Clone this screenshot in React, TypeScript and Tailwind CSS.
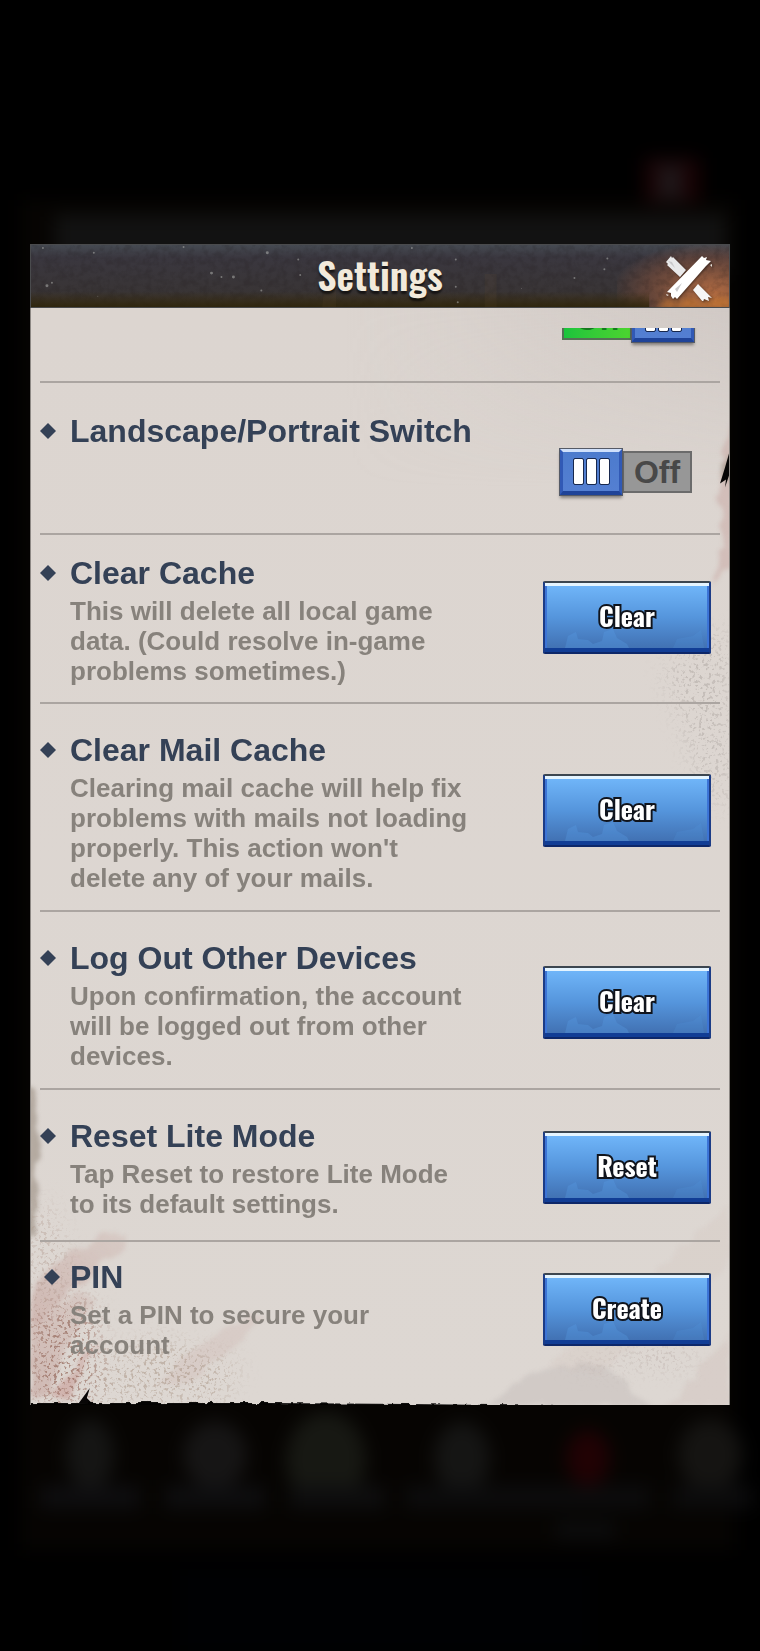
import { useState } from 'react';
import clsx from 'clsx';

interface ToggleProps {
  id: string;
  label: string;
  defaultOn: boolean;
}

interface Setting {
  id: string;
  title: string;
  description?: string;
  action?: string;
  rowClass: string;
  titleClass?: string;
  controlClass?: string;
}

const settings: Setting[] = [
  {
    id: 'orientation',
    title: 'Landscape/Portrait Switch',
    rowClass: 'min-h-[152px] border-b-2 pt-[30px]',
    controlClass: 'pt-9 pr-7',
  },
  {
    id: 'cache',
    title: 'Clear Cache',
    description: 'This will delete all local game data. (Could resolve in-game problems sometimes.)',
    action: 'Clear',
    rowClass: 'border-b-2 pt-5 pb-4',
    controlClass: 'pt-[26px] pr-[9px]',
  },
  {
    id: 'mail',
    title: 'Clear Mail Cache',
    description:
      "Clearing mail cache will help fix problems with mails not loading properly. This action won't delete any of your mails.",
    action: 'Clear',
    rowClass: 'border-b-2 pt-7 pb-[17px]',
    controlClass: 'pt-[42px] pr-[9px]',
  },
  {
    id: 'devices',
    title: 'Log Out Other Devices',
    description: 'Upon confirmation, the account will be logged out from other devices.',
    action: 'Clear',
    rowClass: 'border-b-2 pt-7 pb-[17px]',
    controlClass: 'pt-[26px] pr-[9px]',
  },
  {
    id: 'lite',
    title: 'Reset Lite Mode',
    description: 'Tap Reset to restore Lite Mode to its default settings.',
    action: 'Reset',
    rowClass: 'border-b-2 pt-7 pb-[21px]',
    controlClass: 'pt-[13px] pr-[9px]',
  },
  {
    id: 'pin',
    title: 'PIN',
    description: 'Set a PIN to secure your account',
    action: 'Create',
    rowClass: 'pt-[17px] pb-[21px]',
    titleClass: 'pl-1 gap-[10px]',
    controlClass: 'pt-[14px] pr-[9px]',
  },
];

const headerSpecks = [
  [12, 3, 2], [237, 8, 3], [181, 29, 3], [203, 33, 3], [191, 33, 2], [268, 15, 2], [270, 31, 2],
  [16, 42, 3], [21, 39, 2], [231, 47, 2], [153, 2, 2], [63, 8, 2], [382, 3, 2], [426, 15, 2],
  [426, 43, 2], [428, 59, 2], [578, 14, 2], [575, 25, 2], [545, 34, 2], [492, 45, 1], [67, 53, 1],
];

// Dimmed and blurred game screen behind the dialog
function Backdrop() {
  return (
    <svg
      className="absolute inset-0 h-full w-full"
      viewBox="0 0 760 1651"
      preserveAspectRatio="none"
      aria-hidden
    >
      <defs>
        <filter
          id="soft"
          filterUnits="userSpaceOnUse"
          x="0"
          y="0"
          width="760"
          height="1651"
          colorInterpolationFilters="sRGB"
        >
          <feGaussianBlur stdDeviation="9" />
        </filter>
      </defs>
      <g filter="url(#soft)">
        <rect x="20" y="200" width="715" height="1350" fill="#060402" />
        <rect x="55" y="215" width="670" height="60" fill="#121212" />
        <rect x="644" y="158" width="56" height="44" fill="#190204" />
        <path d="M658 165l24 34m0-34l-24 34" stroke="#1f1c1e" strokeWidth="10" />
        <ellipse cx="90" cy="1455" rx="24" ry="36" fill="#151514" />
        <ellipse cx="215" cy="1455" rx="32" ry="34" fill="#161515" />
        <ellipse cx="326" cy="1460" rx="40" ry="48" fill="#171813" />
        <ellipse cx="462" cy="1458" rx="28" ry="36" fill="#151514" />
        <ellipse cx="588" cy="1458" rx="22" ry="28" fill="#210204" />
        <ellipse cx="710" cy="1455" rx="32" ry="36" fill="#151412" />
        <rect x="40" y="1486" width="100" height="22" fill="#0e0e10" />
        <rect x="165" y="1486" width="100" height="22" fill="#0e0e10" />
        <rect x="290" y="1486" width="95" height="22" fill="#0e0e0f" />
        <rect x="405" y="1486" width="245" height="22" fill="#0c0c0d" />
        <rect x="672" y="1486" width="80" height="22" fill="#0c0c0d" />
        <rect x="555" y="1522" width="60" height="16" fill="#0c0d0e" />
        <rect x="180" y="1570" width="410" height="81" fill="#000103" />
      </g>
    </svg>
  );
}

// Stains, speckles and worn edges of the paper
function PaperTexture() {
  return (
    <svg
      className="absolute inset-0 h-full w-full"
      viewBox="0 0 700 1100"
      preserveAspectRatio="none"
      aria-hidden
    >
      <defs>
        <filter id="speckle" x="-5%" y="-5%" width="110%" height="110%" colorInterpolationFilters="sRGB">
          <feTurbulence type="fractalNoise" baseFrequency="0.3" numOctaves="3" seed="4" />
          <feColorMatrix values="0 0 0 0 0  0 0 0 0 0  0 0 0 0 0  0 0 0 7 -3.8" result="dots" />
          <feGaussianBlur in="SourceGraphic" stdDeviation="12" />
          <feComposite in2="dots" operator="in" />
          <feGaussianBlur stdDeviation="0.5" />
        </filter>
        <filter id="rough" x="-10%" y="-10%" width="120%" height="120%" colorInterpolationFilters="sRGB">
          <feTurbulence type="fractalNoise" baseFrequency="0.06" numOctaves="3" seed="9" />
          <feDisplacementMap in="SourceGraphic" scale="14" xChannelSelector="R" yChannelSelector="G" />
          <feGaussianBlur stdDeviation="2" />
        </filter>
        <filter id="torn" x="-5%" y="-300%" width="110%" height="700%" colorInterpolationFilters="sRGB">
          <feTurbulence type="fractalNoise" baseFrequency="0.1" numOctaves="2" seed="2" />
          <feDisplacementMap in="SourceGraphic" scale="6" xChannelSelector="R" yChannelSelector="G" />
        </filter>
        <linearGradient id="wash" x1="0" y1="1" x2="1" y2="0">
          <stop offset="0" stopColor="#bd8f88" stopOpacity="0.42" />
          <stop offset="1" stopColor="#bd8f88" stopOpacity="0.16" />
        </linearGradient>
        <linearGradient id="shade" x1="0" y1="0" x2="1" y2="0">
          <stop offset="0.45" stopColor="#c4bcb9" stopOpacity="0" />
          <stop offset="1" stopColor="#c4bcb9" stopOpacity="0.45" />
        </linearGradient>
        <linearGradient id="fade" x1="0" y1="0" x2="0" y2="1">
          <stop offset="0" stopColor="#fff" />
          <stop offset="1" stopColor="#000" />
        </linearGradient>
        <mask id="top">
          <rect width="700" height="180" fill="url(#fade)" />
        </mask>
      </defs>
      <rect width="700" height="180" fill="url(#shade)" mask="url(#top)" />
      <g filter="url(#rough)">
        <path d="M0 990l20-30 50-30 26-2-6 18-30 24L0 1020z" fill="url(#wash)" />
        <path d="M0 1090V1015l56-30 10 10-30 44-16 50z" fill="url(#wash)" />
        <path d="M124 1080l40-36 56-36 16 4-34 32-50 36z" fill="#c39c97" opacity="0.18" />
        <path d="M18 1092l54-60-38 64z" fill="#b86a62" opacity="0.32" />
        <path d="M454 1100q40-34 80-40t60 16 30 26z" fill="#aaa4a3" opacity="0.24" />
        <path d="M640 1100l60-70v70z" fill="#c3a49e" opacity="0.18" />
        <path d="M520 1060L700 900v60L570 1070z" fill="#c3a49e" opacity="0.1" />
        <path d="M704 110q-10 30-8 50l-6 30 4 50-10 40q16-20 20-30z" fill="#c49c97" opacity="0.4" />
        <path d="M704 145q-14 10-10 22t10 6z" fill="#9a8c7e" opacity="0.5" />
        <path d="M-4 780h9l1 18-2 30 4 20-3 30 2 22-3 30h-8z" fill="#a2978b" opacity="0.7" />
      </g>
      <g filter="url(#speckle)">
        <path d="M0 1010l60-16 10 60-10 46H0z" fill="#96695c" opacity="0.7" />
        <path d="M0 900h20l20 70-40 50z" fill="#a88c80" opacity="0.4" />
        <path d="M60 1070l60-40 90 30-20 40H70z" fill="#a08a78" opacity="0.45" />
        <path d="M530 1060l130-20v20z" fill="#97807a" opacity="0.4" />
        <path d="M635 365l40-40h24l1 180-25-20-25-80z" fill="#6d6560" opacity="0.22" />
      </g>
      <path d="M700 146l-4 14-5 16 6-4-1 8 4-12z" fill="#060505" />
      <path d="M48 1098l11-15-3 10 6 6z" fill="#080606" />
      <path
        d="M-10 1098h250l140 1 160 2 170 1v20H-10z"
        fill="#030201"
        filter="url(#torn)"
      />
    </svg>
  );
}

function Grip() {
  return (
    <span className="z-10 flex h-[46px] w-[62px] items-center justify-center gap-1 border-3 border-t-[#cfe0fb] border-r-[#3159b5] border-b-4 border-b-[#1f4398] border-l-[#3159b5] bg-linear-to-b from-[#4c7bcd] to-[#547fd2] shadow-[0_0_0_1px_#555a66,0_3px_3px_#0006]">
      <i className="h-[25px] w-[9px] rounded-[1px] bg-white outline-1 outline-[#18284e]" />
      <i className="h-[25px] w-[9px] rounded-[1px] bg-white outline-1 outline-[#18284e]" />
      <i className="h-[25px] w-[9px] rounded-[1px] bg-white outline-1 outline-[#18284e]" />
    </span>
  );
}

function Toggle({ id, label, defaultOn }: ToggleProps) {
  const [on, setOn] = useState(defaultOn);

  return (
    <label htmlFor={id} className={clsx('relative flex cursor-pointer items-center', on && 'flex-row-reverse')}>
      <input
        id={id}
        type="checkbox"
        aria-label={label}
        checked={on}
        onChange={() => setOn(!on)}
        className="absolute inset-0 m-0 cursor-pointer opacity-0"
      />
      <Grip />
      <span
        className={clsx(
          'flex h-[42px] w-[70px] items-center justify-center border-2 text-[32px] font-bold',
          on
            ? 'border-[#557055] bg-linear-to-r from-[#19c43c] to-[#4bd42f] text-[#137a1d]'
            : 'border-[#6b6b6b] bg-[#979797] text-[#484848]',
        )}
      >
        {on ? 'On' : 'Off'}
      </span>
    </label>
  );
}

function ActionButton({ children, describedBy }: { children: string; describedBy: string }) {
  return (
    <button
      type="button"
      aria-describedby={describedBy}
      className="relative flex h-[73px] w-[168px] cursor-pointer items-center justify-center rounded-xs border-2 border-t-[#3c4650] border-r-[#1c3c86] border-b-[#0d2769] border-l-[#1c3c86] bg-linear-to-b from-[#72b8fb] via-[#5595dc] to-[#3f6dae] pb-1 font-[Oswald,sans-serif] text-[26px] font-bold text-white shadow-[inset_0_3px_0_#e4f4ff,inset_0_-4px_0_#113d95,inset_2px_0_0_#3c74d6,inset_-2px_0_0_#3c74d6]"
    >
      <svg className="absolute bottom-1 left-5 h-5 w-[140px]" viewBox="0 0 140 20" aria-hidden>
        <path d="M0 20l3-12 8-4 2 7 10 1 5 4 9-3 2-9 9-3 4 9 10 6 2 4z" fill="#5aa0e8" opacity="0.3" />
        <path d="M108 20l4-9 16-3 8-6 3 18z" fill="#5aa0e8" opacity="0.15" />
      </svg>
      <span className="relative [paint-order:stroke_fill] [-webkit-text-stroke:4px_#10141c]">
        {children}
      </span>
    </button>
  );
}

function CloseIcon() {
  return (
    <svg className="h-12 w-12 drop-shadow-[1px_1px_1px_#0006]" viewBox="0 0 48 48" aria-hidden>
      <path d="M2 9l5-6 1 2 1-1 13 13-6 7L3 12l1-1z" fill="#e9e9ea" />
      <path d="M38 3l2 2 3-1-1 3 5 1-5 5-29 33-2-2-2 2-2-3 0-3-4-1z" fill="#fff" />
      <path d="M11 36l7-6-5 9zM4 8l4 1 3 6z" fill="#c9c9cb" />
      <path d="M34 31l14 14-4-1 1 4-5-2-1 3-10-12z" fill="#f6f6f6" />
      <path d="M46 12l2-1 0 3zM2 41l3 1-2 1z" fill="#e5e0da" />
    </svg>
  );
}

export default function App() {
  return (
    <div className="relative min-h-screen bg-black px-[30px] pt-[244px] pb-[244px] font-['Liberation_Sans',Arial,sans-serif]">
      <Backdrop />

      <main className="relative">
        <header className="relative flex h-16 items-center justify-center overflow-hidden border border-[#4a4b4d] bg-linear-to-b from-[#454a52] via-[#3a373f] via-20% to-[#383331]">
          <div className="absolute inset-y-0 right-0 w-28 bg-radial-[at_85%_75%] from-[#b06a42] via-[#70493a]/70 to-transparent to-75%" />
          <svg
            className="absolute inset-0 h-full w-full"
            viewBox="0 0 700 64"
            preserveAspectRatio="none"
            aria-hidden
          >
            <defs>
              <filter id="grime" x="0" y="0" width="100%" height="100%" colorInterpolationFilters="sRGB">
                <feTurbulence type="fractalNoise" baseFrequency="0.14" numOctaves="4" seed="7" />
                <feColorMatrix values="0 0 0 0 0.1  0 0 0 0 0.08  0 0 0 0 0.08  0 0 0 3 -1.2" />
              </filter>
              <filter id="ember" x="-20%" y="-50%" width="140%" height="200%">
                <feGaussianBlur stdDeviation="4" />
              </filter>
              <linearGradient id="ground" x1="0" y1="0" x2="0" y2="1">
                <stop offset="0" stopColor="#3a2a08" stopOpacity="0" />
                <stop offset="1" stopColor="#2e2408" stopOpacity="0.85" />
              </linearGradient>
            </defs>
            <rect width="700" height="64" filter="url(#grime)" opacity="0.15" />
            <rect y="48" width="620" height="16" fill="url(#ground)" />
            <path d="M294 44h12v20h-14zM455 30h12v34h-12z" fill="#6a5330" opacity="0.12" />
            <path
              d="M626 66l12-10 10 4 12-6 14 6 14-6 16 2v10z"
              fill="#e0842e"
              opacity="0.6"
              filter="url(#ember)"
            />
            {headerSpecks.map(([x, y, r]) => (
              <circle key={`${x}-${y}`} cx={x} cy={y} r={r / 2} fill="#b9bcb8" opacity="0.5" />
            ))}
          </svg>
          <h1 className="relative pb-1 font-[Oswald,sans-serif] text-[38px] leading-none font-semibold text-[#f2eadb] [text-shadow:0_3px_2px_#0009]">
            Settings
          </h1>
          <button type="button" aria-label="Close" className="absolute top-2 right-[17px] cursor-pointer">
            <CloseIcon />
          </button>
        </header>

        <section className="relative border-x border-[#8d8884] bg-linear-to-b from-[#dcd5d0] to-[#ddd7d2] px-[9px] pt-5 pb-6">
          <PaperTexture />
          <div className="relative overflow-hidden">
            <div className="flex h-[55px] items-start justify-end border-b-2 border-[#aba5a1] pr-[26px]">
              <div className="-mt-8">
                <Toggle id="previous" label="Setting" defaultOn />
              </div>
            </div>

            {settings.map((s) => (
              <div key={s.id} className={clsx('flex items-start justify-between border-[#aba5a1]', s.rowClass)}>
                <div>
                  <h2
                    id={`${s.id}-title`}
                    className={clsx(
                      'flex items-center text-[32px] leading-9 font-bold whitespace-nowrap text-[#344156]',
                      s.titleClass ?? 'gap-[14px]',
                    )}
                  >
                    <svg className="h-4 w-4 flex-none" viewBox="0 0 16 16" aria-hidden>
                      <path d="M8 0l8 8-8 8-8-8z" fill="currentColor" />
                    </svg>
                    {s.title}
                  </h2>
                  {s.description && (
                    <p className="mt-[5px] ml-[30px] max-w-[400px] text-[26px] leading-[30px] font-bold text-[#87827c]">
                      {s.description}
                    </p>
                  )}
                </div>
                <div className={clsx('flex-none', s.controlClass)}>
                  {s.action ? (
                    <ActionButton describedBy={`${s.id}-title`}>{s.action}</ActionButton>
                  ) : (
                    <Toggle id={s.id} label={s.title} defaultOn={false} />
                  )}
                </div>
              </div>
            ))}
          </div>
        </section>
      </main>
    </div>
  );
}
